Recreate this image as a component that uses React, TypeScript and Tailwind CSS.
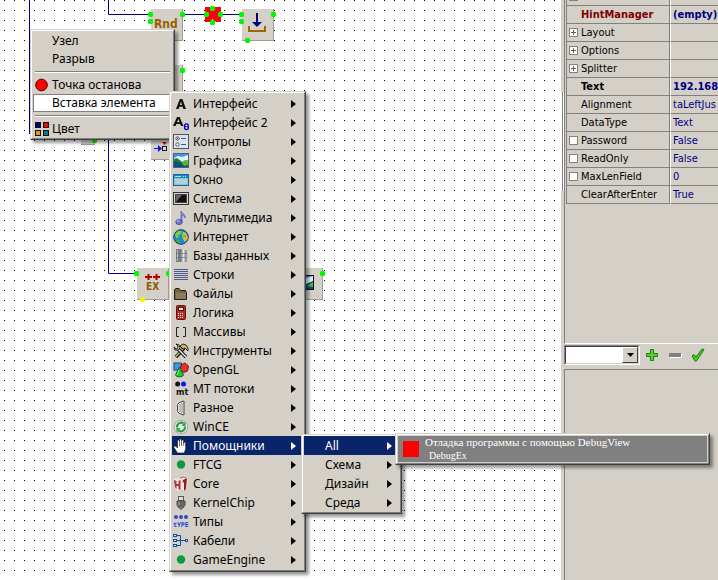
import React, { useState } from "react";
import clsx from "clsx";

// ======= TYPES =======
interface MenuEntry {
  label: string;
  icon?: React.ReactNode;
}

interface PropRow {
  name: string;
  value: string;
  kind?: "group" | "check";
  bold?: boolean;
  nameColor?: string;
}

// ======= ICONS =======
const Svg: React.FC<{ children: React.ReactNode }> = ({ children }) => (
  <svg viewBox="0 0 16 16" className="w-4 h-4 block shrink-0" aria-hidden="true">
    {children}
  </svg>
);

const icons = {
  a: (
    <Svg>
      <path d="M3 13L6.8 3h2.6L13 13h-2.6l-.7-2.200H6.300L5.600 13zM6.900 8.900h2.200L8 5.400z" fill="#111" />
    </Svg>
  ),
  a2: (
    <Svg>
      <path d="M0 11L4 2h2.600L10.500 11H8l-.8-2H3.300l-.8 2zM4 7.200h2.600L5.300 4z" fill="#111" />
      <rect x="11.700" y="9" width="3.500" height="5.500" rx="1.500" fill="#fff" stroke="#0008b8" strokeWidth="1.500" />
      <path d="M12 11.700h3" stroke="#0008b8" />
    </Svg>
  ),
  controls: (
    <Svg>
      <rect x="0.5" y="0.5" width="15" height="14" fill="#dbe4ec" stroke="#505860" />
      <circle cx="4.500" cy="4.500" r="1.700" fill="#fff" stroke="#555" />
      <circle cx="4.500" cy="10.500" r="1.700" fill="#fff" stroke="#555" />
      <circle cx="4.500" cy="4.500" r="0.700" fill="#333" />
      <path d="M8 4.500h5M8 10.500h5" stroke="#2d5f90" />
    </Svg>
  ),
  picture: (
    <Svg>
      <rect x="0.5" y="0.5" width="15" height="14" fill="#3f93dc" stroke="#4a6478" />
      <path d="M1 5l4-2 4 1 6-2v5l-6 2-8-2z" fill="#e4f5ff" />
      <path d="M1 6l3-1 4 3 3 3-5 1-5-2z" fill="#1f7f35" />
      <path d="M1 9c4-1 7 1 9 3l5-2v4H1z" fill="#0c4f86" />
      <path d="M9 9l3-2 3 1v4l-4 1z" fill="#57b829" />
    </Svg>
  ),
  window: (
    <Svg>
      <rect x="0.5" y="2.500" width="15" height="11" fill="#8fc0da" stroke="#1c6590" />
      <rect x="1" y="3" width="14" height="3" fill="#0f8cc4" />
      <path d="M2 4.500h6M10 4.500h1M12 4.500h1" stroke="#bfeaff" />
      <rect x="2" y="7" width="12" height="5" fill="#b4d0de" />
    </Svg>
  ),
  system: (
    <Svg>
      <rect x="0.5" y="1.500" width="15" height="12" fill="#d4d4d4" stroke="#333" />
      <rect x="2.500" y="3.500" width="11" height="8" fill="#111" stroke="#444" />
      <path d="M3 11V4h6z" fill="#666" />
    </Svg>
  ),
  media: (
    <Svg>
      <path d="M8 12V1c1 3 5 3 4 7-.5-2-1.500-2.500-3-3v7.500" fill="#8a8ee8" stroke="#5055b0" strokeWidth="0.700" />
      <ellipse cx="6" cy="12" rx="3.300" ry="2.600" fill="#6c72dc" stroke="#3c4193" strokeWidth="0.700" />
      <ellipse cx="5" cy="11" rx="1.300" ry="0.800" fill="#c3c6ff" />
    </Svg>
  ),
  internet: (
    <Svg>
      <circle cx="8" cy="8" r="7.300" fill="#128ae6" stroke="#173d56" />
      <path d="M2 5l3-3 4 0-1 3-3 2 1 2-3 0z" fill="#7bcf30" />
      <path d="M10 3l3 1 2 5-3 4-2-3-1-4z" fill="#f0c02a" />
      <path d="M3 10l4 1 0 4-3-2z" fill="#4aad38" />
      <path d="M10 5l3 1 0 3-3-1z" fill="#7bbd2c" />
    </Svg>
  ),
  database: (
    <Svg>
      <rect x="3" y="1" width="6" height="13" fill="#777c82" />
      <path d="M4.500 2v11" stroke="#b9bdc1" />
      <rect x="8" y="2" width="6" height="12" rx="1" fill="#94989d" />
      <path d="M10.500 2v12" stroke="#e2e4e6" strokeWidth="2" />
      <path d="M3 5.500h11M3 9.500h11" stroke="#666b70" strokeWidth="0.600" />
    </Svg>
  ),
  lines: (
    <Svg>
      <path d="M1 2.500h14M1 4.500h14M1 6.500h14M1 8.500h14M1 10.500h14M1 12.500h14" stroke="#4a5a96" />
    </Svg>
  ),
  folder: (
    <Svg>
      <path d="M1.500 13.500v-10l1.500-1h3l1.500 2h5l1 2v7z" fill="#786449" stroke="#231c12" />
      <path d="M3 13V7h10v6z" fill="#8f7a5f" />
    </Svg>
  ),
  calc: (
    <Svg>
      <rect x="3.500" y="0.500" width="9" height="14" rx="1" fill="#b92b2b" stroke="#651010" />
      <rect x="5.500" y="2.500" width="5" height="3" fill="#fff3d2" stroke="#501010" />
      <path d="M5 8.500h6M5 10.500h6M5 12.500h6" stroke="#ffe6e6" strokeDasharray="1 1" />
    </Svg>
  ),
  brackets: (
    <Svg>
      <path d="M6 3.500H3.500v9H6M10 3.500h2.500v9H10" stroke="#222" fill="none" />
    </Svg>
  ),
  tools: (
    <Svg>
      <path d="M3 14L11 5" stroke="#111" strokeWidth="3.400" />
      <path d="M3 13.500l8-9" stroke="#d8b060" strokeWidth="1.600" />
      <path d="M7 3l3-2 3 1 2 3v3l-3-3-2 1z" fill="#d5b46b" stroke="#111" strokeWidth="0.900" />
      <path d="M5 6l8 8" stroke="#111" strokeWidth="3.400" />
      <path d="M5 6l8 8" stroke="#eee" strokeWidth="1.400" />
      <path d="M1 4l2 2 2-1 0-2-2-2 3 1 1 3-2 2-3 0z" fill="#eee" stroke="#111" strokeWidth="0.900" />
    </Svg>
  ),
  opengl: (
    <Svg>
      <rect x="1" y="1" width="7.500" height="7" fill="#3c9ae2" stroke="#174978" />
      <path d="M8 3l4-2 3.500 3-1 5-4 1.500-3-3z" fill="#ee3030" stroke="#761010" />
      <path d="M6.500 5l4 8c-1 2.500-7 2.500-8 0z" fill="#1fc737" stroke="#0b6518" />
      <path d="M6 8l-2 5" stroke="#79ef82" />
    </Svg>
  ),
  mt: (
    <Svg>
      <circle cx="4.700" cy="3" r="2.500" fill="#111" />
      <circle cx="10.500" cy="3" r="2.500" fill="#1010f0" />
      <text x="3" y="14" fontSize="9" fontWeight="bold" fontFamily="DejaVu Sans Condensed, sans-serif" fill="#111">
        mt
      </text>
    </Svg>
  ),
  connector: (
    <Svg>
      <path d="M4.500 4.500l2-2 4.500-1.500v14l-4.500-1.500-2-2z" fill="#e4e4e4" stroke="#444" />
      <path d="M7 4.500v8M9 3.500v10" stroke="#444" strokeDasharray="1 1" />
    </Svg>
  ),
  wince: (
    <Svg>
      <circle cx="8" cy="8" r="6.600" fill="#e8f2e8" stroke="#8a9a8a" strokeWidth="0.700" />
      <path d="M4 8.500a4.200 4.200 0 0 1 6.500-4M12 7.500a4.200 4.200 0 0 1-6.500 4" stroke="#2d9d45" strokeWidth="2.200" fill="none" />
      <path d="M8.500 7h4V2.500zM7.500 9h-4v4.500z" fill="#2d9d45" />
    </Svg>
  ),
  hand: (
    <Svg>
      <path
        d="M4.500 15L1 9.500c-.7-1.500 1-2 2-1L4.500 10V3c0-1.500 2-1.500 2 0V2c0-1.500 2-1.500 2 0v1c0-1.500 2.200-1.500 2.200 0v2c0-1.300 2-1.300 2 0v6l-1.500 4z"
        fill="#fff"
        stroke="#111"
        strokeWidth="0.600"
      />
      <path d="M6.500 3v5M8.500 3v5M10.700 4v4" stroke="#111" strokeWidth="0.600" />
    </Svg>
  ),
  dot: (
    <Svg>
      <circle cx="8" cy="7.500" r="4.200" fill="#0b9a3a" />
    </Svg>
  ),
  core: (
    <Svg>
      <path d="M1 3l4-1 3 1 4-2 3 2-1 10-3 2-2-2-4 2-3-3z" fill="#efe4e4" />
      <path d="M1 4l2.500 1v3l2 0V5l2-1v10l-2-1v-3h-2v3l-1.500-2z" fill="#ad3438" />
      <path d="M10 4l4-2-1 11-2 2V6l-1.500 1z" fill="#8d2226" />
      <path d="M7 2l3-1 3 1" stroke="#c36a6d" fill="none" />
    </Svg>
  ),
  plug: (
    <Svg>
      <rect x="5.500" y="1.500" width="5" height="4" fill="#ddd" stroke="#555" />
      <path d="M4 6h8v4l-2 3H6l-2-3z" fill="#666" stroke="#4b4b4b" />
      <path d="M6 7v3" stroke="#aaa" />
      <path d="M8 12v3" stroke="#777" strokeWidth="2" />
    </Svg>
  ),
  types: (
    <Svg>
      <circle cx="3" cy="3" r="2" fill="#3345c8" />
      <circle cx="8" cy="3" r="2" fill="#3345c8" />
      <circle cx="13" cy="3" r="2" fill="#3345c8" />
      <text x="0" y="13" fontSize="6.500" fontWeight="bold" fontFamily="DejaVu Sans Mono, monospace" fill="#1c3ce0">
        tYPE
      </text>
    </Svg>
  ),
  cables: (
    <Svg>
      <path d="M3 2.500h4.500v10H3M3 7.500h10" fill="none" stroke="#12508f" />
      <rect x="0.500" y="1.500" width="3" height="2" fill="#cfe6ff" stroke="#12508f" />
      <rect x="0.500" y="6.500" width="3" height="2" fill="#cfe6ff" stroke="#12508f" />
      <rect x="0.500" y="11.500" width="3" height="2" fill="#cfe6ff" stroke="#12508f" />
      <rect x="12.500" y="6.500" width="2" height="2" fill="#cfe6ff" stroke="#12508f" />
    </Svg>
  ),
  breakpoint: (
    <Svg>
      <circle cx="7.500" cy="8" r="5.800" fill="#f00" stroke="#400" />
    </Svg>
  ),
  colors: (
    <Svg>
      <rect x="1.500" y="1.500" width="5" height="5" fill="#000080" stroke="#111" />
      <rect x="9.500" y="1.500" width="5" height="5" fill="#f00" stroke="#111" />
      <rect x="1.500" y="9.500" width="5" height="5" fill="#e09a10" stroke="#111" />
      <rect x="9.500" y="9.500" width="5" height="5" fill="#008080" stroke="#111" />
    </Svg>
  ),
};

// ======= DATA =======
const elementMenu: MenuEntry[] = [
  { label: "Интерфейс", icon: icons.a },
  { label: "Интерфейс 2", icon: icons.a2 },
  { label: "Контролы", icon: icons.controls },
  { label: "Графика", icon: icons.picture },
  { label: "Окно", icon: icons.window },
  { label: "Система", icon: icons.system },
  { label: "Мультимедиа", icon: icons.media },
  { label: "Интернет", icon: icons.internet },
  { label: "Базы данных", icon: icons.database },
  { label: "Строки", icon: icons.lines },
  { label: "Файлы", icon: icons.folder },
  { label: "Логика", icon: icons.calc },
  { label: "Массивы", icon: icons.brackets },
  { label: "Инструменты", icon: icons.tools },
  { label: "OpenGL", icon: icons.opengl },
  { label: "МТ потоки", icon: icons.mt },
  { label: "Разное", icon: icons.connector },
  { label: "WinCE", icon: icons.wince },
  { label: "Помощники", icon: icons.hand },
  { label: "FTCG", icon: icons.dot },
  { label: "Core", icon: icons.core },
  { label: "KernelChip", icon: icons.plug },
  { label: "Типы", icon: icons.types },
  { label: "Кабели", icon: icons.cables },
  { label: "GameEngine", icon: icons.dot },
];

const helperMenu: MenuEntry[] = [
  { label: "All" },
  { label: "Схема" },
  { label: "Дизайн" },
  { label: "Среда" },
];

const propRows: PropRow[] = [
  { name: "HintManager", value: "(empty)", bold: true, nameColor: "text-[#800000]" },
  { name: "Layout", value: "", kind: "group" },
  { name: "Options", value: "", kind: "group" },
  { name: "Splitter", value: "", kind: "group" },
  { name: "Text", value: "192.168", bold: true },
  { name: "Alignment", value: "taLeftJus" },
  { name: "DataType", value: "Text" },
  { name: "Password", value: "False", kind: "check" },
  { name: "ReadOnly", value: "False", kind: "check" },
  { name: "MaxLenField", value: "0", kind: "check" },
  { name: "ClearAfterEnter", value: "True" },
];

// ======= SCHEME =======
const Pin: React.FC<{ x: number; y: number; color?: string }> = ({ x, y, color = "#00f800" }) => (
  <path d={`M${x - 1} ${y - 2}h3l1 1v3l-1 1h-3l-1-1v-3z`} fill={color} />
);

const Node: React.FC<{ x: number; y: number; children?: React.ReactNode }> = ({ x, y, children }) => (
  <g transform={`translate(${x} ${y})`}>
    <rect width="32" height="32" fill="#a09c94" />
    <rect width="31" height="31" fill="#d4d0c8" />
    {children}
  </g>
);

const Scheme = () => (
  <svg width="561" height="580" className="absolute left-0 top-0" aria-hidden="true">
    <path
      d="M29.500 0V134M108.500 0V14.500H150M182 14.500H242M108.500 140V273.500H136"
      stroke="#000080"
      fill="none"
    />
    <Node x={151} y={9}>
      <text x="3" y="19" fontSize="12" fontWeight="bold" fontFamily="DejaVu Sans Condensed, sans-serif" fill="#966000">
        Rnd
      </text>
    </Node>
    <Node x={242} y={9}>
      <path d="M15 4v10" stroke="#000080" strokeWidth="2" />
      <path d="M10 13h10l-5 5z" fill="#000080" />
      <path d="M7 17v5h16v-5" stroke="#a06400" strokeWidth="2" fill="none" />
    </Node>
    <Node x={151} y={65} />
    <rect x="81" y="130" width="14" height="15" fill="#a09c94" />
    <rect x="81" y="130" width="13" height="14" fill="#d4d0c8" />
    <Node x={151} y={128}>
      <path d="M3 20.500h6" stroke="#1010e0" />
      <path d="M7 17l4 3.500-4 3.500z" fill="#1010e0" />
      <path d="M11 14h5l-2.500 3z" fill="#d00000" />
      <rect x="11.500" y="18.500" width="4" height="4" fill="#ddd" stroke="#111" />
    </Node>
    <Node x={137} y={268}>
      <path d="M8 9h7M11.500 6v6M16 9h7M19.500 6v6" stroke="#b00000" strokeWidth="2" />
      <text x="9" y="22" fontSize="10" fontWeight="bold" fontFamily="DejaVu Sans Condensed, sans-serif" fill="#8a5a00">
        EX
      </text>
    </Node>
    <Node x={291} y={268}>
      <rect x="7.500" y="7.500" width="15" height="14" fill="#2f83d0" stroke="#111" />
      <path d="M8 12l14-4v5l-6 5H8z" fill="#d8f0ff" />
      <path d="M8 17l7-1 7-3v8H8z" fill="#0c4f86" />
      <path d="M16 18l6-4v5z" fill="#57b829" />
    </Node>
    <path d="M205 7h5l2.500 3 2.500-3h6v4l-2 3 2 3v5h-5l-3.500-3-2.500 3h-5v-5l2-3-2-3z" fill="#f00" />
    <Pin x={150} y={14} />
    <Pin x={150} y={21} />
    <Pin x={182} y={14} />
    <Pin x={206} y={14} />
    <Pin x={220} y={14} />
    <Pin x={212} y={8} />
    <Pin x={212} y={22} />
    <Pin x={241} y={14} />
    <Pin x={241} y={21} />
    <Pin x={273} y={14} />
    <Pin x={247} y={40} />
    <Pin x={182} y={70} />
    <Pin x={94} y={140} />
    <Pin x={136} y={273} />
    <Pin x={168} y={273} />
    <Pin x={142} y={299} color="#f8f000" />
    <Pin x={322} y={273} />
  </svg>
);

// ======= MENUS =======
const menuFrame =
  "absolute bg-[#d4d0c8] border border-t-[#d4d0c8] border-l-[#d4d0c8] border-r-[#404040] border-b-[#404040] shadow-[3px_3px_3px_rgba(0,0,0,0.4)]";
const menuInner = "border border-t-white border-l-white border-r-[#808080] border-b-[#808080]";
const menuText = "text-[12px] leading-4 font-['Noto_Sans',sans-serif]";

const Arrow = () => (
  <svg viewBox="0 0 5 8" className="w-[5px] h-2 ml-auto mr-[7px]" aria-hidden="true">
    <path d="M0 0l5 4l-5 4z" fill="currentColor" />
  </svg>
);

const Separator = () => (
  <div className="h-2 px-[2px] pt-[3px]">
    <div className="h-[2px] border-t border-t-[#808080] border-b border-b-white" />
  </div>
);

const ContextItem: React.FC<{ entry: MenuEntry; active?: boolean }> = ({ entry, active }) => (
  <button
    role="menuitem"
    className={clsx(
      "flex items-center w-full h-[18px] border text-left",
      active ? "bg-white border-[#808080]" : "border-transparent"
    )}
  >
    <span className="w-[18px] shrink-0">{entry.icon}</span>
    {entry.label}
  </button>
);

const SubMenuList: React.FC<{
  items: MenuEntry[];
  active: string;
  onPick: (label: string) => void;
}> = ({ items, active, onPick }) => (
  <>
    {items.map((item) => (
      <button
        key={item.label}
        role="menuitem"
        onClick={() => onPick(item.label)}
        className={clsx(
          "flex items-center w-full h-[19px] pl-px text-left",
          active === item.label ? "bg-[#0a246a] text-white" : "text-black"
        )}
      >
        <span className="w-5 shrink-0">{item.icon}</span>
        {item.label}
        <Arrow />
      </button>
    ))}
  </>
);

// ======= PROPERTIES =======
const PropertyTable = () => (
  <table className="w-full table-fixed border-separate border-spacing-0 border-l border-[#808080] text-[11px] leading-[17px]">
    <colgroup>
      <col className="w-[103px]" />
      <col />
    </colgroup>
    <tbody>
      <tr className="h-[6px]">
        <td className="p-0 border-b border-r border-[#808080]">
          <div className="w-[9px] h-px ml-[2px] mb-1 bg-[#808080]" />
        </td>
        <td className="p-0 border-b border-l border-b-[#808080] border-l-white" />
      </tr>
      {propRows.map((row) => (
        <tr key={row.name} className={clsx("h-[18px]", row.bold && "font-bold")}>
          <th
            scope="row"
            className={clsx(
              "p-0 border-b border-r border-[#808080] text-left",
              row.bold ? "font-bold" : "font-normal",
              row.nameColor
            )}
          >
            <label className="flex items-center h-[17px] pl-[2px]">
              <span className="w-3 shrink-0 flex">
                {row.kind === "group" && (
                  <button
                    aria-label={`Expand ${row.name}`}
                    className="relative w-[9px] h-[9px] bg-white border border-[#808080]"
                  >
                    <span className="absolute left-px top-[3px] w-[5px] h-px bg-[#606060]" />
                    <span className="absolute left-[3px] top-px w-px h-[5px] bg-[#606060]" />
                  </button>
                )}
                {row.kind === "check" && (
                  <input type="checkbox" className="appearance-none w-[9px] h-[9px] bg-white border border-[#808080]" />
                )}
              </span>
              {row.name}
            </label>
          </th>
          <td className="p-0 pl-[2px] border-b border-l border-b-[#808080] border-l-white text-[#000080] whitespace-nowrap overflow-hidden">
            {row.value}
          </td>
        </tr>
      ))}
    </tbody>
  </table>
);

const Toolbar = () => (
  <div className="flex items-center h-[25px] pb-[3px]">
    <div className="relative w-[76px] h-5 border border-t-[#808080] border-l-[#808080] border-r-white border-b-white">
      <select
        aria-label="Filter"
        className="block appearance-none w-full h-full bg-white border border-t-[#404040] border-l-[#404040] border-r-[#d4d0c8] border-b-[#d4d0c8]"
      />
      <span className="absolute right-px top-px w-4 h-4 bg-[#d4d0c8] border border-t-white border-l-white border-r-[#404040] border-b-[#404040] flex items-center justify-center pointer-events-none">
        <svg viewBox="0 0 7 4" className="w-[7px] h-1" aria-hidden="true">
          <path d="M0 0h7L3.500 4z" />
        </svg>
      </span>
    </div>
    <button aria-label="Add" className="ml-[5px]">
      <svg viewBox="0 0 14 14" className="block w-[14px] h-[14px]">
        <path d="M5.500 1.500h3v4h4v3h-4v4h-3v-4h-4v-3h4z" fill="#5fd02c" stroke="#14820f" />
      </svg>
    </button>
    <button aria-label="Remove" className="ml-[9px]">
      <svg viewBox="0 0 14 14" className="block w-[14px] h-[14px]">
        <path d="M2 6h12v4H2z" fill="#fff" />
        <path d="M1 5h12v4H1z" fill="#808080" />
      </svg>
    </button>
    <button aria-label="Apply" className="ml-[9px]">
      <svg viewBox="0 0 14 14" className="block w-[14px] h-[14px]">
        <path d="M1 8l2-1.500 2 2.500L11 1l2 .5-7.500 11.500H4z" fill="#4cc81e" stroke="#14820f" />
      </svg>
    </button>
  </div>
);

// ======= APP =======
const App: React.FC = () => {
  const [category, setCategory] = useState("Помощники");
  const [helper, setHelper] = useState("All");

  return (
    <div className="relative flex h-screen overflow-hidden bg-[#d4d0c8] text-black font-['DejaVu_Sans_Condensed','DejaVu_Sans',sans-serif]">
      <main className="relative flex-1 overflow-hidden bg-white bg-[conic-gradient(from_270deg_at_1px_1px,#000_90deg,transparent_90deg)] bg-[size:10px_10px] bg-[position:4px_0]">
        <Scheme />
      </main>

      <div className="w-[3px] shrink-0 pt-[92px]">
        <div className="h-[99px] bg-white px-px">
          <div className="h-full bg-[#808080]" />
        </div>
      </div>

      <aside className="w-[154px] shrink-0 flex flex-col overflow-hidden">
        <section className="h-[344px] shrink-0 border-l border-l-[#808080] border-b border-b-white pl-px">
          <PropertyTable />
        </section>
        <Toolbar />
        <section className="flex-1 border-l border-t border-[#808080]" />
      </aside>

      {/* Context menu */}
      <div role="menu" className={clsx(menuFrame, menuText, "left-[30px] top-[29px] w-[145px]")}>
        <div className={clsx(menuInner, "p-px pb-0")}>
          <ContextItem entry={{ label: "Узел" }} />
          <ContextItem entry={{ label: "Разрыв" }} />
          <Separator />
          <ContextItem entry={{ label: "Точка останова", icon: icons.breakpoint }} />
          <ContextItem entry={{ label: "Вставка элемента" }} active />
          <Separator />
          <ContextItem entry={{ label: "Цвет", icon: icons.colors }} />
        </div>
      </div>

      {/* Element categories */}
      <div role="menu" className={clsx(menuFrame, menuText, "left-[169px] top-[91px] w-[137px]")}>
        <div className={clsx(menuInner, "p-px")}>
          <SubMenuList items={elementMenu} active={category} onPick={setCategory} />
        </div>
      </div>

      <div role="menu" className={clsx(menuFrame, menuText, "left-[301px] top-[434px] w-[101px]")}>
        <div className={clsx(menuInner, "px-px")}>
          <SubMenuList items={helperMenu} active={helper} onPick={setHelper} />
        </div>
      </div>

      <div role="menu" className={clsx(menuFrame, "left-[395px] top-[433px] w-[315px]")}>
        <div className={menuInner}>
          <button
            role="menuitem"
            className="flex items-center w-full h-7 bg-[#808080] border border-[#d4d0c8] pl-[5px] text-left text-white text-[11px] leading-[13px] font-['Liberation_Serif',serif]"
          >
            <span className="w-4 h-4 bg-[#f00]" />
            <span className="pl-[6px]">
              <span className="block">Отладка программы с помощью DebugView</span>
              <span className="block pl-1 text-[10px]">DebugEx</span>
            </span>
          </button>
        </div>
      </div>
    </div>
  );
};

export default App;
